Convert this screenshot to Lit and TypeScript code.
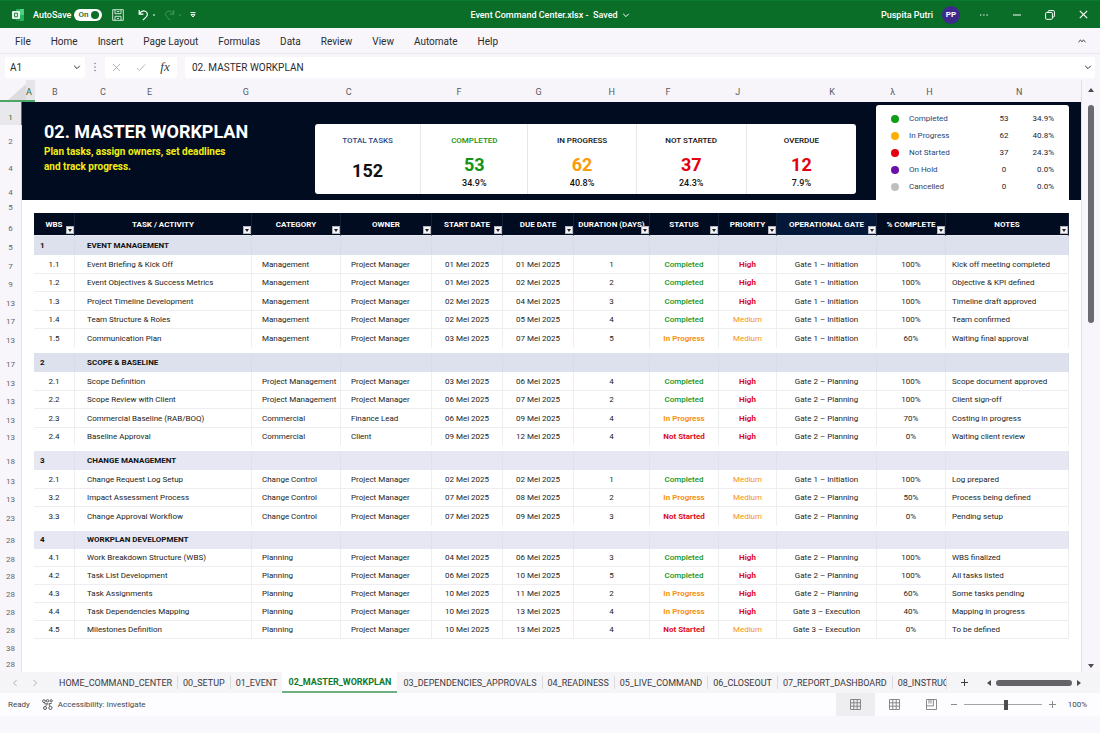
import { LitElement, html, css, svg } from "lit";
import { customElement, state } from "lit/decorators.js";
import { classMap } from "lit/directives/class-map.js";
import { styleMap } from "lit/directives/style-map.js";

type Task = [string, string, string, string, string, string, string, string, string, string, string, string];
interface Group { no: string; title: string; tone: string; tasks: Task[]; }

const MENU = ["File", "Home", "Insert", "Page Layout", "Formulas", "Data", "Review", "View", "Automate", "Help"];

/* Letter and the distance to the next one, as a share of the header strip. */
const LETTERS: [string, number][] = [
  ["A", 26], ["B", 48], ["C", 47], ["E", 96], ["G", 103], ["C", 111], ["F", 79], ["G", 73], ["H", 57],
  ["F", 70], ["J", 94], ["K", 61], ["λ", 36], ["H", 90], ["N", 65],
];

/* Row label and row height. */
const ROWS: [string, number][] = [
  ["1", 23], ["2", 24], ["4", 27], ["4", 24], ["5", 15], ["6", 21], ["5", 19], ["7", 19], ["9", 18], ["13", 19],
  ["17", 18], ["13", 19], ["17", 24], ["13", 19], ["13", 18], ["13", 19], ["13", 17], ["18", 24], ["13", 20],
  ["13", 18], ["23", 19], ["28", 22], ["28", 19], ["28", 17], ["28", 18], ["28", 18], ["28", 18], ["38", 18], ["28", 16],
];

const KPIS = [
  { label: "TOTAL TASKS", value: "152", pct: "", cls: "total", w: 106 },
  { label: "COMPLETED", value: "53", pct: "34.9%", cls: "done", w: 107 },
  { label: "IN PROGRESS", value: "62", pct: "40.8%", cls: "progress", w: 108 },
  { label: "NOT STARTED", value: "37", pct: "24.3%", cls: "idle", w: 110 },
  { label: "OVERDUE", value: "12", pct: "7.9%", cls: "overdue", w: 110 },
];

const LEGEND = [
  ["Completed", "53", "34.9%", "green"],
  ["In Progress", "62", "40.8%", "amber"],
  ["Not Started", "37", "24.3%", "red"],
  ["On Hold", "0", "0.0%", "purple"],
  ["Cancelled", "0", "0.0%", "grey"],
];

const COLUMNS: [string, number][] = [
  ["WBS", 41], ["TASK / ACTIVITY", 177], ["CATEGORY", 89], ["OWNER", 91], ["START DATE", 71], ["DUE DATE", 71],
  ["DURATION (DAYS)", 76], ["STATUS", 69], ["PRIORITY", 58], ["OPERATIONAL GATE", 100], ["% COMPLETE", 69], ["NOTES", 123],
];
const TOTAL = COLUMNS.reduce((sum, c) => sum + c[1], 0);

const PM = "Project Manager";
const G1 = "Gate 1 – Initiation";
const G2 = "Gate 2 – Planning";
const G3 = "Gate 3 – Execution";
const GROUPS: Group[] = [
  { no: "1", title: "EVENT MANAGEMENT", tone: "blue", tasks: [
    ["1.1", "Event Briefing & Kick Off", "Management", PM, "01 Mei 2025", "01 Mei 2025", "1", "Completed", "High", G1, "100%", "Kick off meeting completed"],
    ["1.2", "Event Objectives & Success Metrics", "Management", PM, "01 Mei 2025", "02 Mei 2025", "2", "Completed", "High", G1, "100%", "Objective & KPI defined"],
    ["1.3", "Project Timeline Development", "Management", PM, "02 Mei 2025", "04 Mei 2025", "3", "Completed", "High", G1, "100%", "Timeline draft approved"],
    ["1.4", "Team Structure & Roles", "Management", PM, "02 Mei 2025", "05 Mei 2025", "4", "Completed", "Medium", G1, "100%", "Team confirmed"],
    ["1.5", "Communication Plan", "Management", PM, "03 Mei 2025", "07 Mei 2025", "5", "In Progress", "Medium", G1, "60%", "Waiting final approval"],
  ] },
  { no: "2", title: "SCOPE & BASELINE", tone: "blue", tasks: [
    ["2.1", "Scope Definition", "Project Management", PM, "03 Mei 2025", "06 Mei 2025", "4", "Completed", "High", G2, "100%", "Scope document approved"],
    ["2.2", "Scope Review with Client", "Project Management", PM, "06 Mei 2025", "07 Mei 2025", "2", "Completed", "High", G2, "100%", "Client sign-off"],
    ["2.3", "Commercial Baseline (RAB/BOQ)", "Commercial", "Finance Lead", "06 Mei 2025", "09 Mei 2025", "4", "In Progress", "High", G2, "70%", "Costing in progress"],
    ["2.4", "Baseline Approval", "Commercial", "Client", "09 Mei 2025", "12 Mei 2025", "4", "Not Started", "High", G2, "0%", "Waiting client review"],
  ] },
  { no: "3", title: "CHANGE MANAGEMENT", tone: "lilac", tasks: [
    ["2.1", "Change Request Log Setup", "Change Control", PM, "02 Mei 2025", "02 Mei 2025", "1", "Completed", "Medium", G1, "100%", "Log prepared"],
    ["3.2", "Impact Assessment Process", "Change Control", PM, "07 Mei 2025", "08 Mei 2025", "2", "In Progress", "Medium", G2, "50%", "Process being defined"],
    ["3.3", "Change Approval Workflow", "Change Control", PM, "07 Mei 2025", "09 Mei 2025", "3", "Not Started", "Medium", G2, "0%", "Pending setup"],
  ] },
  { no: "4", title: "WORKPLAN DEVELOPMENT", tone: "lilac compact", tasks: [
    ["4.1", "Work Breakdown Structure (WBS)", "Planning", PM, "04 Mei 2025", "06 Mei 2025", "3", "Completed", "High", G2, "100%", "WBS finalized"],
    ["4.2", "Task List Development", "Planning", PM, "06 Mei 2025", "10 Mei 2025", "5", "Completed", "High", G2, "100%", "All tasks listed"],
    ["4.3", "Task Assignments", "Planning", PM, "10 Mei 2025", "11 Mei 2025", "2", "In Progress", "High", G2, "60%", "Some tasks pending"],
    ["4.4", "Task Dependencies Mapping", "Planning", PM, "10 Mei 2025", "13 Mei 2025", "4", "In Progress", "High", G3, "40%", "Mapping in progress"],
    ["4.5", "Milestones Definition", "Planning", PM, "10 Mei 2025", "13 Mei 2025", "4", "Not Started", "Medium", G3, "0%", "To be defined"],
  ] },
];

const TABS = ["HOME_COMMAND_CENTER", "00_SETUP", "01_EVENT", "02_MASTER_WORKPLAN", "03_DEPENDENCIES_APPROVALS",
  "04_READINESS", "05_LIVE_COMMAND", "06_CLOSEOUT", "07_REPORT_DASHBOARD", "08_INSTRUC"];

const baseStyles = css`
  *, :host { box-sizing: border-box; }
  button, input {
    font: inherit; color: inherit; background: none; border: 0; padding: 0; margin: 0; min-width: 0;
  }
  button { display: flex; align-items: center; justify-content: center; white-space: nowrap; }
  svg { display: block; fill: none; stroke: currentColor; flex: none; }
`;

const chevron = (w = 8) => svg`<svg width=${w} height=${w} viewBox="0 0 8 8" stroke-width="1"><path d="M1.2 2.8 4 5.6 6.8 2.8"/></svg>`;

@customElement("title-bar")
class TitleBar extends LitElement {
  static styles = [baseStyles, css`
    :host {
      display: grid; grid-template-columns: 1fr auto 1fr; align-items: center; height: 28px;
      background: #0a6e29; border-top: 1px solid #0a7a30; color: #fff; font-size: 9px; font-weight: 500;
    }
    .left { display: flex; align-items: center; padding-left: 12px; }
    .logo { margin-right: 9px; stroke: none; }
    .switch { display: flex; align-items: center; gap: 3px; }
    .switch input {
      appearance: none; width: 28px; height: 12px; border-radius: 6px; background: #fff; display: flex;
      align-items: center; justify-content: space-between; padding: 0 3px 0 4px;
    }
    .switch input::before { content: "On"; font-size: 8px; line-height: 12px; color: #0a6e29; }
    .switch input::after { content: ""; width: 8px; height: 8px; border-radius: 50%; background: #0a6e29; }
    .save { margin-left: 10px; color: #cfe6d5; }
    .undo { margin-left: 14px; gap: 4px; }
    .redo { margin-left: 9px; gap: 4px; color: #469a5c; }
    .more { margin-left: 9px; }
    .doc { gap: 4px; font-weight: 500; }
    .right { display: flex; align-items: center; justify-content: flex-end; }
    .avatar {
      width: 18px; height: 18px; border-radius: 50%; background: #3f2a8c; font-size: 8px; font-weight: 700;
      margin-left: 9px;
    }
    .win { width: 33px; height: 27px; }
    .win:last-child { width: 34px; }
    .first { margin-left: 7px; }
  `];
  render() {
    return html`
      <div class="left">
        <svg class="logo" width="12" height="12" viewBox="0 0 12 12">
          <rect x="4" y="0" width="8" height="12" rx="1" fill="#23b35d"/><rect x="8" y="0" width="4" height="6" fill="#4fd07c"/>
          <rect x="4" y="6" width="4" height="6" fill="#178a43"/><rect x="0" y="2" width="8" height="8" rx="1" fill="#e9fbef"/>
          <path d="M2.6 4.2h2.8v3.6H2.6z" stroke="#12803b" stroke-width="1"/>
        </svg>
        <label class="switch">AutoSave<input type="checkbox" checked></label>
        <button class="save" aria-label="Save">
          <svg width="12" height="12" viewBox="0 0 12 12" stroke-width="1"><path d="M.7.7h10.6v10.6H.7zM3 .7v4h6v-4M3 11.3V7.3h6v4M5 9.4h2M4.8 2.6h2.6"/></svg>
        </button>
        <button class="undo" aria-label="Undo">
          <svg width="11" height="12" viewBox="0 0 11 12" stroke-width="1.2"><path d="M1.2 1v4.2h4.2M1.4 5C2.8 2.6 5 1.4 7.2 2.3c2.6 1.1 2.8 3.8 1 5.6L4.9 11.2"/></svg>
          <svg width="2" height="2" viewBox="0 0 2 2"><path d="M0 1h2"/></svg>
        </button>
        <button class="redo" aria-label="Redo">
          <svg width="11" height="12" viewBox="0 0 11 12" stroke-width="1"><path d="M9.8 1v4.2H5.6M9.6 5C8.2 2.6 6 1.4 3.8 2.3 1.2 3.4 1 6.1 2.8 7.9L6.1 11.2"/></svg>
          <svg width="2" height="2" viewBox="0 0 2 2"><path d="M0 1h2"/></svg>
        </button>
        <button class="more" aria-label="Customize toolbar">
          <svg width="6" height="6" viewBox="0 0 6 6" stroke-width="1"><path d="M.5.6h5M1 2.6h4L3 5z"/></svg>
        </button>
      </div>
      <button class="doc">Event Command Center.xlsx&nbsp;-&nbsp; Saved ${chevron()}</button>
      <div class="right">
        <span>Puspita Putri</span>
        <button class="avatar">PP</button>
        <button class="win first" aria-label="More"><svg width="8" height="2" viewBox="0 0 8 2" stroke-width="1.2" stroke-dasharray="1.4 1.8"><path d="M0 1h8"/></svg></button>
        <button class="win" aria-label="Minimize"><svg width="8" height="2" viewBox="0 0 8 2" stroke-width="1"><path d="M0 1h8"/></svg></button>
        <button class="win" aria-label="Restore"><svg width="10" height="10" viewBox="0 0 10 10" stroke-width="1"><rect x=".6" y="2.5" width="6.8" height="6.8" rx="1"/><path d="M3 2.3V1.6Q3 .6 4 .6h4.4q1 0 1 1V6q0 1-1 1h-.8"/></svg></button>
        <button class="win" aria-label="Close"><svg width="9" height="9" viewBox="0 0 9 9" stroke-width="1.2"><path d="M.8.8l7.4 7.4M8.2.8.8 8.2"/></svg></button>
      </div>`;
  }
}

@customElement("formula-strip")
class FormulaStrip extends LitElement {
  static styles = [baseStyles, css`
    :host { display: block; background: #f8f6fa; color: #2b2b30; }
    .menu {
      display: flex; align-items: center; gap: 20px; height: 26px; padding: 1px 14px 0 15px; font-size: 10px;
      border-bottom: 1px solid #ebe9ee;
    }
    .fold { margin-left: auto; }
    .bar { display: flex; align-items: center; gap: 8px; height: 26px; padding: 0 5px; font-size: 10px; }
    .box { display: flex; align-items: center; height: 21px; background: #fff; border-radius: 2px; }
    .name { width: 80px; padding: 0 4px 0 5px; }
    .name input { flex: 1; }
    .dots { width: 4px; fill: #666; stroke: none; }
    .tools { width: 72px; justify-content: space-around; color: #b5b5b9; }
    .fx { font-family: "Liberation Serif", serif; font-style: italic; font-size: 13px; color: #3c3c40; }
    .formula { flex: 1; padding: 0 3px 0 7px; }
    .formula input { flex: 1; }
  `];
  render() {
    return html`
      <nav class="menu">
        ${MENU.map((m) => html`<button>${m}</button>`)}
        <button class="fold" aria-label="Collapse ribbon"><svg width="8" height="4" viewBox="0 0 8 4" stroke-width="1"><path d="M.5 3 2.4 1.2 4 2.6 5.6 1.2 7.5 3"/></svg></button>
      </nav>
      <div class="bar">
        <div class="box name"><input type="text" value="A1" aria-label="Name box"><button aria-label="Names">${chevron()}</button></div>
        <svg class="dots" height="10" viewBox="0 0 4 10"><circle cx="2" cy="1.5" r=".7"/><circle cx="2" cy="5" r=".7"/><circle cx="2" cy="8.5" r=".7"/></svg>
        <div class="box tools">
          <button aria-label="Cancel"><svg width="9" height="9" viewBox="0 0 9 9" stroke-width="1"><path d="M1 1l7 7M8 1 1 8"/></svg></button>
          <button aria-label="Enter"><svg width="10" height="9" viewBox="0 0 10 9" stroke-width="1"><path d="M.8 5 3.4 7.6 9.2 1.4"/></svg></button>
          <button class="fx" aria-label="Insert function">fx</button>
        </div>
        <div class="box formula"><input type="text" value="02. MASTER WORKPLAN" aria-label="Formula"><button aria-label="Expand formula bar">${chevron()}</button></div>
      </div>`;
  }
}

@customElement("summary-banner")
class SummaryBanner extends LitElement {
  static styles = [baseStyles, css`
    :host {
      display: grid; grid-template-columns: 271fr 561fr 193fr; height: 98px; padding: 0 12px 0 22px;
      background: #020c20; color: #111;
    }
    .intro { padding-top: 18px; color: #fff; white-space: nowrap; }
    h1 { margin: 0; font-size: 18px; line-height: 23px; font-weight: 700; }
    p { margin: 1px 0 0; font-size: 10px; line-height: 15px; font-weight: 700; color: #f3ee12; }
    .kpis { display: flex; margin: 22px 20px 6px 0; background: #fff; border-radius: 3px; }
    .kpi { display: flex; flex-direction: column; align-items: center; padding-top: 11px; font-weight: 500; }
    .kpi + .kpi { border-left: 1px solid #e6e6ec; }
    .label { font-size: 8px; line-height: 12px; }
    .value { font-size: 18px; line-height: 22px; font-weight: 700; margin-top: 7px; }
    .pct { font-size: 9px; line-height: 12px; margin-top: 1px; }
    .total .label { color: #1f4a86; }
    .total .value { margin-top: 13px; }
    .done .label, .done .value { color: #149414; }
    .progress .value { color: #fb9a0a; }
    .idle .value, .overdue .value { color: #e3000f; }
    .legend {
      margin: 3px 0 0; padding: 5px 15px 0; list-style: none; background: #fff; border-radius: 3px 3px 0 0; font-size: 8px;
    }
    .legend li { display: grid; grid-template-columns: 18px 1fr 22px 39px; align-items: center; height: 17px; color: #26262b; }
    .legend .name { color: #1f4674; }
    .dot { width: 8px; height: 8px; border-radius: 50%; }
    .num { text-align: center; }
    .share { text-align: right; }
    .green { background: #0f9d17; }
    .amber { background: #fbb004; }
    .red { background: #e3000f; }
    .purple { background: #6a12a8; }
    .grey { background: #bfbfc2; }
    .legend li:last-child .name { color: #3a3a48; }
  `];
  render() {
    return html`
      <div class="intro"><h1>02. MASTER WORKPLAN</h1><p>Plan tasks, assign owners, set deadlines<br>and track progress.</p></div>
      <div class="kpis">
        ${KPIS.map((k) => html`
          <div class="kpi ${k.cls}" style=${styleMap({ flex: `${k.w} 1 0` })}>
            <span class="label">${k.label}</span><span class="value">${k.value}</span><span class="pct">${k.pct}</span>
          </div>`)}
      </div>
      <ul class="legend">
        ${LEGEND.map(([name, n, pct, tone]) => html`
          <li><span class="dot ${tone}"></span><span class="name">${name}</span><span class="num">${n}</span><span class="share">${pct}</span></li>`)}
      </ul>`;
  }
}

@customElement("workplan-table")
class WorkplanTable extends LitElement {
  static styles = [baseStyles, css`
    :host { display: block; font-size: 8px; line-height: 12px; color: #1c1c22; }
    table { width: 100%; border-collapse: separate; border-spacing: 0; table-layout: fixed; }
    th, td { padding: 0; white-space: nowrap; font-weight: 400; text-align: center; }
    thead th {
      position: relative; height: 23px; padding-top: 2px; background: #020c20; color: #fff; font-weight: 700;
      border-right: 1px solid #13203a; border-bottom: 1px solid #e9ebf3;
    }
    thead .gate { background: #04193a; }
    .filter { position: absolute; right: 0; bottom: 1px; width: 8px; height: 8px; background: #f4f4f8; border: 1px solid #b4b4be; }
    .filter svg { fill: #222; stroke: none; }
    .section td, .section th { height: 19px; font-weight: 700; background: #dde1ee; border-right: 1px solid #d8dcea; color: #111; }
    .lilac .section td, .lilac .section th { background: #e6e7f2; border-right-color: #e0e1ee; }
    .section .no { text-align: left; padding-left: 6px; }
    .section .title { text-align: left; padding-left: 12px; }
    .task td { height: 18px; padding-top: 1px; border-right: 1px solid #eeedf2; border-bottom: 1px solid #eeedf2; }
    .task:nth-child(even) td { height: 19px; }
    .compact .section td, .compact .section th, .compact .task td, .compact .task:nth-child(even) td { height: 18px; }
    .compact .task td { padding-top: 0; }
    .task:nth-last-child(2) td { border-bottom-color: transparent; }
    .compact .task:nth-last-child(2) td { border-bottom-color: #eeedf2; }
    .task .name { text-align: left; padding-left: 12px; }
    .task .text { text-align: left; padding-left: 10px; }
    .task .note { text-align: left; padding-left: 6px; }
    .task .good { color: #149424; font-weight: 500; }
    .task .warn { color: #f7930f; font-weight: 700; }
    .task .bad { color: #de0a1c; font-weight: 700; }
    .task .high { color: #de0a1c; font-weight: 700; }
    .task .medium { color: #f7930f; }
    .space td { height: 5px; }
  `];
  private cellClass(i: number, v: string) {
    return classMap({
      name: i === 1, text: i === 2 || i === 3, note: i === 11,
      good: v === "Completed", warn: v === "In Progress", bad: v === "Not Started",
      high: i === 8 && v === "High", medium: i === 8 && v === "Medium",
    });
  }
  render() {
    return html`
      <table>
        <colgroup>${COLUMNS.map((c) => html`<col style=${styleMap({ width: `${(c[1] / TOTAL) * 100}%` })}>`)}</colgroup>
        <thead><tr>
          ${COLUMNS.map(([name]) => html`
            <th scope="col" class=${classMap({ gate: name === "OPERATIONAL GATE" })}>${name}
              <button class="filter" aria-label="Filter ${name}"><svg width="4" height="3" viewBox="0 0 4 3"><path d="M0 0h4L2 3z"/></svg></button>
            </th>`)}
        </tr></thead>
        ${GROUPS.map((g) => html`
          <tbody class=${g.tone}>
            <tr class="section"><td class="no">${g.no}</td><th scope="rowgroup" class="title">${g.title}</th>${COLUMNS.slice(2).map(() => html`<td></td>`)}</tr>
            ${g.tasks.map((t) => html`<tr class="task">${t.map((v, i) => html`<td class=${this.cellClass(i, v)}>${v}</td>`)}</tr>`)}
            <tr class="space"><td colspan="12"></td></tr>
          </tbody>`)}
      </table>`;
  }
}

@customElement("sheet-grid")
class SheetGrid extends LitElement {
  static styles = [baseStyles, css`
    :host { display: flex; background: #f8f6fa; }
    .main { flex: 1; min-width: 0; border-right: 1px solid #e2e1e6; }
    .letters { display: flex; height: 22px; font-size: 9px; line-height: 24px; color: #5a5a60; background: #f7f5f9; }
    .corner {
      width: 26px; border-bottom: 2px solid #4da568; display: flex; align-items: flex-end; justify-content: flex-end;
    }
    .corner svg { fill: #dcdbe0; stroke: none; }
    .letter:nth-child(2) { color: #1d6b3c; }
    .letter:nth-child(2) span { display: inline-block; width: 9px; height: 22px; background: #e6e5ea; border-bottom: 2px solid #4da568; }
    .body { display: flex; }
    .gutter { width: 22px; flex: none; font-size: 8px; color: #65656b; }
    .row { display: flex; align-items: flex-end; justify-content: center; line-height: 14px; border-right: 1px solid #e4e3e8; }
    .row:first-child { background: #e9e8ec; color: #1d6b3c; border-right-color: #2f8a50; }
    .canvas { flex: 1; min-width: 0; background: #fff; }
    .plan { margin: 13px 12px 0 12px; }
    .scroll { width: 18px; display: flex; flex-direction: column; align-items: center; padding: 8px 0 4px 0; }
    .scroll svg { fill: #4c4c50; stroke: none; }
    .track { flex: 1; padding-top: 13px; display: flex; align-items: flex-start; }
    .thumb { width: 6px; height: 39%; border-radius: 3px; background: #6b6a6e; }
  `];
  render() {
    return html`
      <div class="main">
        <div class="letters">
          <div class="corner"><svg width="18" height="16" viewBox="0 0 18 16"><path d="M0 16 18 0v16z"/></svg></div>
          ${LETTERS.map(([l, w]) => html`<div class="letter" style=${styleMap({ flex: `${w} 1 0` })}><span>${l}</span></div>`)}
        </div>
        <div class="body">
          <div class="gutter">${ROWS.map(([n, h]) => html`<div class="row" style=${styleMap({ height: `${h}px` })}>${n}</div>`)}</div>
          <div class="canvas"><summary-banner></summary-banner><workplan-table class="plan"></workplan-table></div>
        </div>
      </div>
      <div class="scroll">
        <svg width="6" height="4" viewBox="0 0 6 4"><path d="M0 4 3 0l3 4z"/></svg>
        <div class="track"><div class="thumb"></div></div>
        <svg width="6" height="4" viewBox="0 0 6 4"><path d="M0 0 3 4l3-4z"/></svg>
      </div>`;
  }
}

@customElement("sheet-tabs")
class SheetTabs extends LitElement {
  static styles = [baseStyles, css`
    :host { display: flex; align-items: center; height: 21px; background: #f5f4f7; font-size: 9px; color: #3a3a3f; }
    .arrows { display: flex; gap: 12px; padding: 0 14px 0 11px; color: #b4b4b8; flex: none; }
    .tabs { display: flex; align-items: center; flex: 1 1 0; min-width: 0; overflow: hidden; height: 100%; }
    .tab { height: 13px; padding: 0 5px; flex: none; border-left: 1px solid #dcdbe0; }
    .tab.active { height: 100%; padding: 0 6px; color: #127a2b; background: #fff; font-weight: 700; border-left: 0; border-bottom: 2px solid #6fb083; }
    .tab:first-child, .tab.active + .tab { border-left-color: transparent; }
    .add { width: 35px; height: 13px; border-left: 1px solid #dcdbe0; flex: none; }
    .scroll { display: flex; align-items: center; gap: 5px; width: 94px; margin: 0 19px 0 6px; flex: none; }
    .scroll svg { fill: #4c4c50; stroke: none; }
    .thumb { flex: 1; height: 6px; border-radius: 3px; background: #646367; }
  `];
  @state() active = "02_MASTER_WORKPLAN";
  render() {
    return html`
      <div class="arrows">
        <button aria-label="Previous sheets"><svg width="8" height="8" viewBox="0 0 8 8"><path d="M5.6 1 2.6 4l3 3"/></svg></button>
        <button aria-label="Next sheets"><svg width="8" height="8" viewBox="0 0 8 8"><path d="M2.6 1l3 3-3 3"/></svg></button>
      </div>
      <div class="tabs" role="tablist">
        ${TABS.map((t) => html`<button role="tab" class=${classMap({ tab: true, active: t === this.active })} @click=${() => (this.active = t)}>${t}</button>`)}
      </div>
      <button class="add" aria-label="New sheet"><svg width="7" height="7" viewBox="0 0 7 7"><path d="M3.5 0v7M0 3.5h7"/></svg></button>
      <div class="scroll">
        <svg width="4" height="6" viewBox="0 0 4 6"><path d="M4 0v6L0 3z"/></svg>
        <div class="thumb"></div>
        <svg width="4" height="6" viewBox="0 0 4 6"><path d="M0 0v6l4-3z"/></svg>
      </div>`;
  }
}

@customElement("status-bar")
class StatusBar extends LitElement {
  static styles = [baseStyles, css`
    :host { display: flex; align-items: center; height: 23px; padding: 0 13px 0 8px; background: #fdfcfe; font-size: 8px; color: #46464b; }
    .check { margin-left: 12px; gap: 5px; }
    .views { display: flex; height: 100%; margin-left: auto; color: #7c7c80; }
    .view { width: 37px; }
    .view.on { width: 39px; background: #eeedf0; margin-right: 1px; }
    .zoom { display: flex; align-items: center; gap: 7px; margin-left: 1px; }
    .zoom svg { color: #8a8a8e; }
    input[type="range"] { appearance: none; width: 78px; height: 12px; background: linear-gradient(#a4a4a8, #a4a4a8) center / 100% 1px no-repeat; }
    input[type="range"]::-webkit-slider-thumb { appearance: none; width: 4px; height: 10px; background: #4c4c50; }
    .pct { margin-left: 5px; }
  `];
  render() {
    return html`
      <span>Ready</span>
      <button class="check">
        <svg width="11" height="11" viewBox="0 0 11 11" stroke-width=".9"><circle cx="2" cy="2.2" r="1.4"/><circle cx="5.6" cy="1.8" r="1.2"/><circle cx="9.2" cy="1.8" r="1.1"/><path d="M2.2 4.8h3.6L3.4 7.2M9.6 4.4 6.8 4.8 8 7"/><circle cx="3" cy="9" r="1.5"/><circle cx="8.4" cy="8.9" r="1.6"/></svg>
        Accessibility: Investigate
      </button>
      <div class="views">
        <button class="view on" aria-label="Normal"><svg width="11" height="11" viewBox="0 0 11 11" stroke-width=".9"><path d="M.5.5h10v10H.5zM.5 3.8h10M.5 7.2h10M3.8.5v10M7.2.5v10"/></svg></button>
        <button class="view" aria-label="Page layout"><svg width="11" height="11" viewBox="0 0 11 11" stroke-width=".9"><path d="M.5.5h10v10H.5zM.5 3.8h10M.5 7.2h10M3.8.5v10M7.2.5v10"/></svg></button>
        <button class="view" aria-label="Page break preview"><svg width="11" height="11" viewBox="0 0 11 11" stroke-width=".9"><path d="M.5.5h10v10H.5zM3 .5v4M5 .5v4M7.4.5v6.4H.5"/></svg></button>
      </div>
      <div class="zoom">
        <button aria-label="Zoom out"><svg width="6" height="7" viewBox="0 0 6 7"><path d="M0 3.5h6"/></svg></button>
        <input type="range" min="0" max="200" value="108" aria-label="Zoom">
        <button aria-label="Zoom in"><svg width="7" height="7" viewBox="0 0 7 7"><path d="M0 3.5h7M3.5 0v7"/></svg></button>
        <span class="pct">100%</span>
      </div>`;
  }
}

@customElement("app-root")
class AppRoot extends LitElement {
  static styles = css`
    :host {
      display: flex; flex-direction: column; min-height: 100vh; overflow: hidden; background: #f8f7fb;
      font-family: Roboto, "Liberation Sans", sans-serif; font-size: 9px;
    }
  `;
  render() {
    return html`
      <title-bar></title-bar>
      <formula-strip></formula-strip>
      <sheet-grid></sheet-grid>
      <sheet-tabs></sheet-tabs>
      <status-bar></status-bar>`;
  }
}
